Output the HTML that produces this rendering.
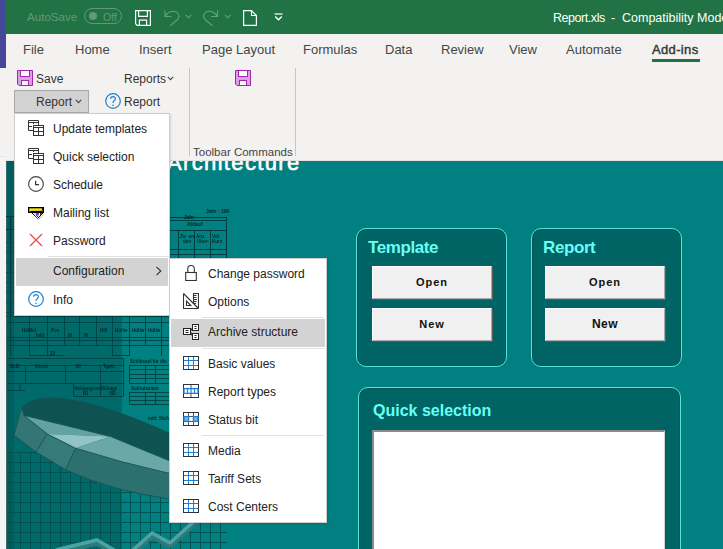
<!DOCTYPE html>
<html><head><meta charset="utf-8">
<style>
*{box-sizing:border-box}
html,body{margin:0;padding:0;width:723px;height:549px;overflow:hidden;background:#008080;font-family:"Liberation Sans",sans-serif}
.a{position:absolute}
.t{position:absolute;white-space:nowrap;line-height:1}
#title{left:0;top:0;width:723px;height:34px;background:#217346}
#purple{left:0;top:0;width:6px;height:68px;background:#45489a}
#ribbon{left:0;top:34px;width:723px;height:127px;background:#f3f2f1;border-bottom:1px solid #e1e0df}
.tab{font-size:13px;color:#454545;top:43px}
.menu{background:#fff;border:1px solid #cdcdcd;box-shadow:1px 1px 2px rgba(0,0,0,.12)}
.mi{position:absolute;left:0;height:28px;width:100%;font-size:12px;color:#222}
.mi span{position:absolute;top:7px;white-space:nowrap;line-height:1}
.mi svg{position:absolute;left:13px;top:4px}
.sep{position:absolute;height:1px;background:#e0e0e0}
.hl{background:#d3d3d3;left:1px;width:calc(100% - 2px)}
.hl>span,.hl>svg{margin-left:-1px}
.sub .mi svg{left:13px}
.panel{position:absolute;background:#006464;border:1.6px solid #58e4de;border-radius:10px;box-shadow:inset 0 0 0 1px rgba(0,70,70,.35)}
.ptitle{position:absolute;font-weight:bold;color:#66fff4;white-space:nowrap;line-height:1}
.btn{position:absolute;width:120px;height:33px;background:#f0f0f0;border-top:1px solid #fff;border-left:1px solid #fff;border-right:1px solid #a8a8a8;border-bottom:1px solid #a8a8a8;box-shadow:1px 1px 0 #5c5c5c;font-size:11px;font-weight:bold;color:#111;text-align:center;line-height:30px;letter-spacing:1px}
</style></head><body>
<svg class="a" style="left:0;top:0" width="723" height="549" viewBox="0 0 723 549">
<defs>
<filter id="soft" x="-5%" y="-5%" width="110%" height="110%"><feGaussianBlur stdDeviation="0.35"/></filter>
<pattern id="grid" x="0" y="2" width="10" height="10" patternUnits="userSpaceOnUse"><path d="M0.5 0V10M0 0.5H10" stroke="#005252" stroke-width="1" fill="none"/></pattern>
</defs>
<rect x="6" y="160" width="116" height="389" fill="#006a6a"/>
<rect x="6" y="160" width="8" height="389" fill="#005e5e"/><rect x="6" y="160" width="1" height="389" fill="#3a6a6a"/>
<!-- upper table right of menu -->
<g stroke="#003c3c" stroke-width="1" fill="none">
<path d="M170 217.5H226.5M170 220.5H226.5M170 230.5H226.5M170 249.5H226.5M170 254.5H226.5M178.5 230V258M194.5 230V258M210.5 230V258M226.5 217V258"/>
</g>
<g fill="#002a2a" font-family="Liberation Sans" font-size="5" font-weight="bold"><text x="206" y="213">Jahr : 199</text><text x="184" y="219">Jahr</text><text x="187" y="226">Ablauf</text></g>
<g fill="#002828" font-family="Liberation Sans" font-size="4.6" font-weight="bold" filter="url(#soft)"><text x="180" y="238">Zu- um</text><text x="196" y="238">Anz.</text><text x="212" y="238">Vol.</text><text x="183" y="243">den</text><text x="197" y="243">Uber-</text><text x="212" y="243">Kurz</text></g>
<!-- tables below main menu -->
<g stroke="#004444" stroke-width="1.1" fill="none" filter="url(#soft)">
<path d="M7 316.5H170M7 322.5H170M7 337.5H170M7 340.5H170M7 345.5H170M10.5 316V356M29.5 316V356M47.5 316V356M64.5 316V345M79.5 316V345M96.5 316V345M112.5 316V356M129.5 316V356M145.5 316V345M161.5 316V356M29.5 355.5H64.5M112.5 355.5H129.5"/>
<path d="M7 358.5H123.5M7 365.5H123.5M7 371.5H123.5M7 383.5H123.5M73.5 396.5H123.5M123.5 358V396M25.5 365V383M65.5 365V383M100.5 365V396M73.5 383V396M20 383V390M7 390.5H25"/>
<path d="M129.5 365.5H170M129.5 369.5H170M129.5 374.5H170M129.5 378.5H170M129.5 383.5H170M129.5 392.5H170M129.5 396.5H170M129.5 400.5H170M129.5 404.5H170M129.5 365V383M129.5 392V404M145.5 365V383M145.5 392V404M155.5 365V383M155.5 392V404"/>
</g>
<g fill="#002828" font-family="Liberation Sans" font-size="4.6" font-weight="bold" filter="url(#soft)"><text x="22" y="332">Hüllfel</text><text x="36" y="337">Inhl</text><text x="51" y="332">Pos</text><text x="68" y="337">M</text><text x="84" y="337">W</text><text x="100" y="332">Hfll</text><text x="115" y="332">Hüllw</text><text x="132" y="332">Hüllw</text><text x="148" y="332">Hüllw</text><text x="50" y="355">23</text><text x="10" y="368">DLB</text><text x="35" y="368">Misch</text><text x="76" y="368">Bf</text><text x="103" y="368">Tgeb.</text><text x="74" y="390">Ablagegrund</text><text x="102" y="390">Ablage</text><text x="83" y="395">B1</text><text x="110" y="395">B2</text><text x="130" y="363">Schlüssel für die</text><text x="131" y="390">Sollrufzeiten</text><text x="148" y="420">mitt. Stufe</text></g>
<!-- grid lower region -->
<rect x="6" y="236" width="8" height="80" fill="url(#grid)"/><path d="M10.5 216V316M6 229.5H14M6 216.5H14" stroke="#003c3c" stroke-width="1.2"/>
<rect x="7" y="452" width="220" height="97" fill="url(#grid)"/>
<rect x="7" y="380" width="120" height="60" fill="url(#grid)" opacity="0.0"/>
<!-- more tables right small -->

<!-- pie chart -->
<path d="M14 435.3L21.5 408L23.8 415.3L47.3 434L75.5 448.2Q122 463 170 473.5V499Q112 491 65.5 469.8L36 452Z" fill="#2c7070"/>
<path d="M36 452L47.3 434L75.5 448.2L65.5 469.8Z" fill="#367a7a"/>
<path d="M14 435.3L21.5 408L23.8 415.3L47.3 434L36 452Z" fill="#347676"/>
<path d="M21.5 409C25 401 38 397 55 397.5C90 400 130 415 170 433V461L110.5 436.4L23.8 415.3Z" fill="#0f5252"/>
<path d="M23.8 415.3L110.5 436.4L47.3 434Z" fill="#62a2a2"/>
<path d="M47.3 434L110.5 436.4L75.5 448.2Z" fill="#92c4c4"/>
<path d="M110.5 436.4L170 461V473.5Q122 463 75.5 448.2Z" fill="#6aa8a8"/>
<path d="M14 435.3L21.5 408M23.8 415.3L47.3 434L75.5 448.2Q122 463 170 473.5M47.3 434L36 452M75.5 448.2L65.5 469.8M14 435.3L36 452L65.5 469.8Q112 491 170 499M23.8 415.3L110.5 436.4L170 461" stroke="#1a5656" stroke-width="1" fill="none"/>
<!-- line chart -->
<path d="M56 552L97 542L114 552M133 552L152 535L170 545L200 518" stroke="#2c7a7a" stroke-width="7" fill="none" stroke-linejoin="bevel"/><path d="M56 550L97 540L114 550M133 550L152 533L170 543L200 516" stroke="#4aa4a4" stroke-width="3.5" fill="none" stroke-linejoin="bevel"/>
<!-- Architecture text -->
<text x="167" y="170.3" font-family="Liberation Sans" font-size="22" fill="#fff" stroke="#fff" stroke-width="0.6" letter-spacing="1.35">Architecture</text>
</svg>
<div id="title" class="a"></div>
<div id="ribbon" class="a"></div>
<div id="purple" class="a"></div>

<!-- title bar content -->
<div class="t" style="left:27px;top:11px;font-size:11.6px;color:#62997a">AutoSave</div>
<div class="a" style="left:84px;top:8px;width:38px;height:16px;border:1px solid #62997a;border-radius:8px"></div>
<div class="a" style="left:89px;top:12px;width:8px;height:8px;background:#62997a;border-radius:50%"></div>
<div class="t" style="left:103px;top:11.5px;font-size:10.5px;color:#62997a">Off</div>

<div class="t" style="left:553px;top:12px;font-size:12.5px;color:#fff;letter-spacing:-0.45px">Report.xls</div><div class="t" style="left:611px;top:12px;font-size:12.5px;color:#fff">-</div><div class="t" style="left:622px;top:12px;font-size:12.5px;color:#fff">Compatibility Mode</div>

<!-- tabs -->
<div class="t tab" style="left:23px">File</div>
<div class="t tab" style="left:75px">Home</div>
<div class="t tab" style="left:139px">Insert</div>
<div class="t tab" style="left:202px">Page Layout</div>
<div class="t tab" style="left:303px">Formulas</div>
<div class="t tab" style="left:385px">Data</div>
<div class="t tab" style="left:441px">Review</div>
<div class="t tab" style="left:509px">View</div>
<div class="t tab" style="left:566px">Automate</div>
<div class="t tab" style="left:652px;color:#3a3a3a;-webkit-text-stroke:0.45px #3a3a3a;letter-spacing:0.35px">Add-ins</div>
<div class="a" style="left:652px;top:59px;width:48px;height:3px;background:#217346"></div>

<!-- title icons -->
<svg class="a" style="left:135px;top:10px" width="16" height="16" viewBox="0 0 16 16" fill="none" stroke="#fff" stroke-width="1.2"><path d="M0.6 0.6H15.4V15.4H2.2L0.6 13.8Z"/><path d="M3.6 0.6V6.4H12.4V0.6"/><path d="M4.4 15.4V10.2H11.6V15.4"/></svg>
<svg class="a" style="left:163px;top:10px" width="30" height="17" viewBox="0 0 30 17" fill="none" stroke="#64a078" stroke-width="1.1"><path d="M2 0.5V6.5H8.5"/><path d="M2.5 6C5 1.5 11.5 -0.5 15 3.5C16.5 5.5 16 8 14 10L7.4 15.7"/><path d="M22.7 5L25.5 7.8L28.3 5"/></svg>
<svg class="a" style="left:202px;top:10px" width="30" height="17" viewBox="0 0 30 17" fill="none" stroke="#64a078" stroke-width="1.1"><path d="M15.5 0.5V6.5H9"/><path d="M15 6C12.5 1.5 6 -0.5 2.5 3.5C1 5.5 1.5 8 3.5 10L10.5 15.7"/><path d="M23 5L25.7 7.8L28.5 5"/></svg>
<svg class="a" style="left:243px;top:10px" width="14" height="16" viewBox="0 0 14 16" fill="none" stroke="#fff" stroke-width="1.2"><path d="M0.6 0.6H8.5L13.4 5.5V15.4H0.6Z"/><path d="M8.5 0.6V5.5H13.4"/></svg>
<svg class="a" style="left:274px;top:13px" width="9" height="8" viewBox="0 0 9 8" fill="none" stroke="#fff" stroke-width="1.2"><path d="M0.5 1H8.5"/><path d="M1.2 3.6L4.5 6.8L7.8 3.6" stroke-width="1.4"/></svg>

<!-- ribbon content -->
<svg class="a" style="left:17px;top:70px" width="16" height="16" viewBox="0 0 16 16"><path d="M0.5 0.5H15.5V15.5H2L0.5 14Z" fill="#dc9fe6" stroke="#a325ae"/><rect x="3.5" y="0.5" width="9" height="6" fill="#fff" stroke="#a325ae"/><rect x="4.5" y="10.5" width="7" height="5" fill="#fff" stroke="#a325ae"/></svg>
<div class="t" style="left:36px;top:73px;font-size:12px;color:#333">Save</div>
<div class="t" style="left:124px;top:73px;font-size:12px;color:#333">Reports</div>
<svg class="a" style="left:167px;top:76px" width="7" height="5" viewBox="0 0 7 5" fill="none" stroke="#444" stroke-width="1.1"><path d="M0.8 0.8L3.5 3.6L6.2 0.8"/></svg>
<svg class="a" style="left:105px;top:93px" width="16" height="16" viewBox="0 0 16 16" fill="none"><circle cx="8" cy="8" r="7.3" stroke="#1c80d0" stroke-width="1.2"/><path d="M5.6 5.8C5.6 3 10.4 3 10.4 5.8C10.4 7.6 8 7.8 8 10" stroke="#1c80d0" stroke-width="1.2"/><circle cx="8" cy="12.2" r="0.8" fill="#1c80d0"/></svg>
<div class="t" style="left:124px;top:96px;font-size:12px;color:#333">Report</div>
<div class="a" style="left:189px;top:68px;width:1px;height:88px;background:#c8c6c4"></div>
<svg class="a" style="left:235px;top:70px" width="16" height="16" viewBox="0 0 16 16"><path d="M0.5 0.5H15.5V15.5H2L0.5 14Z" fill="#dc9fe6" stroke="#a325ae"/><rect x="3.5" y="0.5" width="9" height="6" fill="#fff" stroke="#a325ae"/><rect x="4.5" y="10.5" width="7" height="5" fill="#fff" stroke="#a325ae"/></svg>
<div class="t" style="left:193px;top:147px;font-size:11.5px;color:#444">Toolbar Commands</div>
<div class="a" style="left:295px;top:68px;width:1px;height:88px;background:#c8c6c4"></div>
<div class="a" style="left:0;top:156px;width:6px;height:393px;background:#f4f4f4;border-top:1px solid #e6e6e6"></div>

<!-- teal area -->

<!-- panels -->
<div class="panel" style="left:356px;top:228px;width:151px;height:139px"></div>
<div class="ptitle" style="left:368px;top:239px;font-size:17px;letter-spacing:-0.4px">Template</div>
<div class="btn" style="left:372px;top:266px">Open</div>
<div class="btn" style="left:372px;top:308px">New</div>

<div class="panel" style="left:531px;top:228px;width:151px;height:139px"></div>
<div class="ptitle" style="left:543px;top:239px;font-size:17px;letter-spacing:-0.4px">Report</div>
<div class="btn" style="left:545px;top:266px">Open</div>
<div class="btn" style="left:545px;top:308px;font-size:12px;letter-spacing:0.5px">New</div>

<div class="panel" style="left:358px;top:387px;width:323px;height:200px"></div>
<div class="ptitle" style="left:373px;top:403px;font-size:16px">Quick selection</div>
<div class="a" style="left:372px;top:430px;width:293px;height:130px;background:#fff;border-top:2px solid #8a8a8a;border-left:2px solid #8a8a8a;border-right:1px solid #d0d0d0"></div>

<!-- main menu -->
<div class="a" style="left:14px;top:90px;width:75px;height:23px;background:#d2d2d2;border:1px solid #a8a8a8"></div>
<div class="t" style="left:36px;top:96px;font-size:12px;color:#333">Report</div>
<svg class="a" style="left:75px;top:99px" width="7" height="5" viewBox="0 0 7 5" fill="none" stroke="#444" stroke-width="1.1"><path d="M0.8 0.8L3.5 3.6L6.2 0.8"/></svg>

<div class="a menu" style="left:14px;top:113px;width:156px;height:203px">
<div class="mi" style="top:2px"><svg width="16" height="16" viewBox="0 0 16 16" fill="none"><path d="M5.5 10.5H0.5V0.5H10.5V5M0.5 2.5H10.5M0.5 6.5H4M5.5 2.5V4" stroke="#333"/><rect x="5.5" y="5.5" width="10" height="10" stroke="#333" fill="#fff"/><path d="M5.5 7.5H15.5M10.5 7.5V15.5M5.5 11.5H15.5" stroke="#333"/></svg><span style="left:38px">Update templates</span></div>
<div class="mi" style="top:30px"><svg width="16" height="16" viewBox="0 0 16 16" fill="none"><path d="M5.5 10.5H0.5V0.5H10.5V5M0.5 2.5H10.5M0.5 6.5H4M5.5 2.5V4" stroke="#333"/><rect x="5.5" y="5.5" width="10" height="10" stroke="#333" fill="#fff"/><path d="M5.5 7.5H15.5M10.5 7.5V15.5M5.5 11.5H15.5" stroke="#333"/></svg><span style="left:38px">Quick selection</span></div>
<div class="mi" style="top:58px"><svg width="16" height="16" viewBox="0 0 16 16" fill="none"><circle cx="8" cy="8" r="7.4" stroke="#444" stroke-width="1.1"/><path d="M7.6 4.8V8.6H11" stroke="#333" stroke-width="1.2"/></svg><span style="left:38px">Schedule</span></div>
<div class="mi" style="top:86px"><svg style="top:7px" width="17" height="13" viewBox="0 0 17 13" fill="none"><defs><pattern id="chk" width="2" height="2" patternUnits="userSpaceOnUse"><rect width="1" height="1" fill="#000"/><rect x="1" y="1" width="1" height="1" fill="#000"/><rect x="1" width="1" height="1" fill="#fff"/><rect y="1" width="1" height="1" fill="#fff"/></pattern></defs><path d="M2 5L10.5 12.5L16 6.5V5Z" fill="url(#chk)"/><path d="M5.5 6H13.5L10.5 10Z" fill="#fff"/><rect x="8" y="5.5" width="3" height="3" fill="#2040f0" opacity="0.85"/><rect x="12" y="6" width="2" height="2" fill="#c00000"/><rect x="0" y="0" width="16" height="6" fill="#000"/><rect x="1.5" y="1.3" width="12.5" height="2.6" fill="#f2e21a"/><path d="M1.5 1.3L3 3.9L1.5 5Z" fill="#f2e21a"/><path d="M14 1.3L14.8 4.8L13 3.9Z" fill="#a89a10"/></svg><span style="left:38px">Mailing list</span></div>
<div class="mi" style="top:114px"><svg width="16" height="16" viewBox="0 0 16 16" fill="none"><path d="M2 2L14 14M14 2L2 14" stroke="#e84a4a" stroke-width="1.3"/></svg><span style="left:38px">Password</span></div>
<div class="mi hl" style="top:144px"><span style="left:38px">Configuration</span><svg style="left:140px;top:7.5px" width="8" height="10" viewBox="0 0 8 10" fill="none"><path d="M1.5 0.8L5.8 5L1.5 9.2" stroke="#333" stroke-width="1.1"/></svg></div>
<div class="mi" style="top:173px"><svg width="16" height="16" viewBox="0 0 16 16" fill="none"><circle cx="8" cy="8" r="7.3" stroke="#1c80d0" stroke-width="1.2"/><path d="M5.6 5.8C5.6 3 10.4 3 10.4 5.8C10.4 7.6 8 7.8 8 10" stroke="#1c80d0" stroke-width="1.2"/><circle cx="8" cy="12.2" r="0.8" fill="#1c80d0"/></svg><span style="left:38px">Info</span></div>
<div class="sep" style="left:33px;top:142px;width:121px"></div>
</div>

<div class="a menu sub" style="left:169px;top:258px;width:158px;height:265px">
<div class="mi" style="top:2px"><svg style="left:15px;top:4px" width="13" height="16" viewBox="0 0 13 16" fill="none"><path d="M2.8 7.5V3.8A3.25 3.25 0 0 1 9.3 3.8V7.5" stroke="#333" stroke-width="1.1"/><rect x="0.7" y="7.5" width="10.6" height="8" stroke="#333" stroke-width="1.1" fill="#fff"/></svg><span style="left:38px">Change password</span></div>
<div class="mi" style="top:30px"><svg width="16" height="16" viewBox="0 0 16 16" fill="none"><path d="M10.5 10V0.5H15.5V15.5" stroke="#333" stroke-width="1.1"/><path d="M11 2.5H13.5M11 4.5H13.5M11 6.5H14M11 8.5H13.5M11 10.5H13" stroke="#333"/><path d="M0.5 0.5V15.5H15.5M0.5 0.5L15 15" stroke="#333" stroke-width="1.1"/><path d="M3.5 8.2V12.5H7.8Z" stroke="#333" stroke-width="1.1"/></svg><span style="left:38px">Options</span></div>
<div class="mi hl" style="top:60px"><svg style="top:5px" width="16" height="16" viewBox="0 0 16 16" fill="none"><rect x="0.5" y="4.5" width="7" height="6" stroke="#222" fill="#fff"/><rect x="9.5" y="0.5" width="6" height="6" stroke="#222" fill="#fff"/><rect x="9.5" y="9.5" width="6" height="6" stroke="#222" fill="#fff"/><path d="M2.5 6.5H5.5M2.5 8.5H5.5M11.5 2.5H13.5M11.5 4.5H13.5M11.5 11.5H13.5M11.5 13.5H13.5M7.5 7.5L9.5 3.5M7.5 7.5L9.5 12.5" stroke="#222"/></svg><span style="left:38px">Archive structure</span></div>
<div class="mi" style="top:92px"><svg width="16" height="16" viewBox="0 0 16 16" fill="none"><rect x="0.5" y="1.5" width="15" height="13" stroke="#333"/><path d="M5.5 2V14M10.5 2V14M1 5.5H15M1 10.5H15" stroke="#1a7fd8"/></svg><span style="left:38px">Basic values</span></div>
<div class="mi" style="top:120px"><svg width="16" height="16" viewBox="0 0 16 16" fill="none"><rect x="0.5" y="1.5" width="15" height="13" stroke="#333"/><path d="M8 2V5.5M8 10.5V14" stroke="#555"/><rect x="1" y="5.6" width="14" height="4.8" stroke="#1a7fd8" stroke-width="1.3"/><path d="M4.5 6V10M8 6V10M11.5 6V10" stroke="#1a7fd8" stroke-width="1.2"/></svg><span style="left:38px">Report types</span></div>
<div class="mi" style="top:148px"><svg width="16" height="16" viewBox="0 0 16 16" fill="none"><rect x="0.5" y="1.5" width="15" height="13" stroke="#333"/><path d="M5.5 2V14M10.5 2V14M1 5.5H15M1 10.5H15" stroke="#555"/><rect x="1" y="5.6" width="4.6" height="4.8" fill="#7ab6e6" stroke="#1a7fd8" stroke-width="1.3"/><rect x="10.4" y="5.6" width="4.6" height="4.8" fill="#7ab6e6" stroke="#1a7fd8" stroke-width="1.3"/></svg><span style="left:38px">Status bit</span></div>
<div class="mi" style="top:179px"><svg width="16" height="16" viewBox="0 0 16 16" fill="none"><rect x="0.5" y="1.5" width="15" height="13" stroke="#333"/><path d="M5.5 2V14M10.5 2V14M1 5.5H15M1 10.5H15" stroke="#1a7fd8"/></svg><span style="left:38px">Media</span></div>
<div class="mi" style="top:207px"><svg width="16" height="16" viewBox="0 0 16 16" fill="none"><rect x="0.5" y="1.5" width="15" height="13" stroke="#333"/><path d="M5.5 2V14M10.5 2V14M1 5.5H15M1 10.5H15" stroke="#1a7fd8"/></svg><span style="left:38px">Tariff Sets</span></div>
<div class="mi" style="top:235px"><svg width="16" height="16" viewBox="0 0 16 16" fill="none"><rect x="0.5" y="1.5" width="15" height="13" stroke="#333"/><path d="M5.5 2V14M10.5 2V14M1 5.5H15M1 10.5H15" stroke="#1a7fd8"/></svg><span style="left:38px">Cost Centers</span></div>
<div class="sep" style="left:32px;top:58px;width:122px"></div>
<div class="sep" style="left:32px;top:89px;width:122px"></div>
<div class="sep" style="left:32px;top:176px;width:122px"></div>
</div>

</body></html>
